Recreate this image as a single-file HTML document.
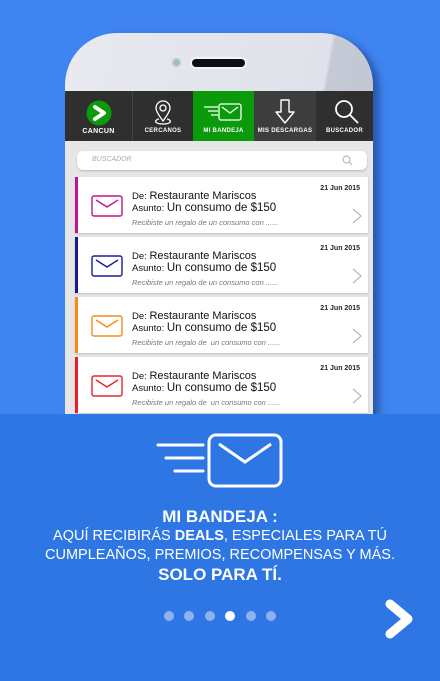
<!DOCTYPE html>
<html><head><meta charset="utf-8"><style>
*{margin:0;padding:0;box-sizing:border-box}
body{width:440px;height:681px;overflow:hidden;background:#3f84f0;font-family:"Liberation Sans",sans-serif;position:relative}
.phone{position:absolute;left:65px;top:33px;width:308px;height:420px;background:linear-gradient(100deg,#e8eaf0 0%,#dfe2ea 70%,#c6cad6 71%,#bfc3d0 100%);border-radius:52px 52px 0 0;box-shadow:6px 4px 8px rgba(0,0,40,.35)}
.cam{position:absolute;left:107px;top:25px;width:9px;height:9px;border-radius:50%;background:#a9adb8;box-shadow:inset 0 0 0 2px #c4c7cf}
.cam:after{content:"";position:absolute;left:3px;top:3px;width:3px;height:3px;border-radius:50%;background:#6fd0e8}
.spk{position:absolute;left:127px;top:26px;width:53px;height:8px;border-radius:4px;background:#0b0f1a;box-shadow:0 0 0 2px #f4f5f8}
.screen{position:absolute;left:65px;top:91px;width:308px;height:330px;background:#e6e6e6;overflow:hidden}
.nav{position:absolute;left:0;top:0;width:308px;height:50px;background:#2f2f2f;display:flex}
.nav div{height:50px;position:relative;color:#fff;font-weight:bold;font-size:6px;text-align:center}
.nav div span{position:absolute;left:0;right:0;top:37px;letter-spacing:.3px}
.search{position:absolute;left:12px;top:60px;width:290px;height:19px;background:#fff;border-radius:6px;box-shadow:0 1px 2px rgba(0,0,0,.2);font-size:7px;font-style:italic;color:#aaa;padding:5px 0 0 15px}
.card{position:absolute;left:10px;width:293px;height:56px;background:#fff;box-shadow:0 1px 2px rgba(0,0,0,.15)}
.card .env{position:absolute;left:13px;top:18px}
.card .t1{position:absolute;left:54px;top:13px;font-size:9.5px;color:#111}
.card .t1 b{font-weight:normal;font-size:11px}
.card .t2{position:absolute;left:54px;top:25px;font-size:9.5px;color:#111}
.card .t2 b{font-weight:normal;font-size:11.5px}
.card .t3{position:absolute;left:54px;top:41px;font-size:7.5px;color:#777;font-style:italic}
.card .d{position:absolute;right:8px;top:8px;font-size:7px;font-weight:bold;color:#222}
.card .ch{position:absolute;right:6px;top:31px}
.panel{position:absolute;left:0;top:414px;width:440px;height:267px;background:#2e76e4;color:#fff;text-align:center}
.h{position:absolute;left:0;right:0;top:93px;font-size:17px;font-weight:bold}
.p{position:absolute;left:0;right:0;top:113px;font-size:14.5px;line-height:19px}
.s{position:absolute;left:0;right:0;top:151px;font-size:17px;font-weight:bold}
.dot{position:absolute;top:197px;width:10px;height:10px;border-radius:50%;background:#8fb1ee}
</style></head><body>
<div class="phone"><div class="cam"></div><div class="spk"></div></div>
<div class="screen">
 <div class="nav">
  <div style="width:68px;border-right:1px solid #444"><svg style="position:absolute;left:21px;top:9px" width="26" height="26"><circle cx="13" cy="13" r="12.5" fill="#0a9a0a"/><path d="M9 7 L18 13 L9 19" stroke="#fff" stroke-width="4" fill="none" stroke-linecap="round" stroke-linejoin="round"/></svg><span style="font-size:7px">CANCUN</span></div>
  <div style="width:60px"><svg style="position:absolute;left:20px;top:8px" width="20" height="28" fill="none" stroke="#fff" stroke-width="1.3"><path d="M10 22 C4 14 3 11 3 9 A7 7 0 0 1 17 9 C17 11 16 14 10 22Z"/><circle cx="10" cy="9" r="3"/><path d="M6 20 C1 21 1 25 10 25 C19 25 19 21 14 20"/></svg><span>CERCANOS</span></div>
  <div style="width:61px;background:#0a9a0a"><svg style="position:absolute;left:11px;top:12px" width="40" height="20" fill="none" stroke="#fff" stroke-width="1.3"><path d="M0 4H14M4 8H14M7 12H14"/><rect x="15" y="1" width="22" height="16" rx="2"/><path d="M18 4L26 10L34 4"/></svg><span>MI BANDEJA</span></div>
  <div style="width:62px;background:#3d3d3d"><svg style="position:absolute;left:21px;top:8px" width="20" height="26" fill="none" stroke="#fff" stroke-width="1.4"><path d="M6 1H14V13H19L10 24L1 13H6Z" stroke-linejoin="round"/></svg><span>MIS DESCARGAS</span></div>
  <div style="width:57px"><svg style="position:absolute;left:18px;top:8px" width="26" height="26" fill="none" stroke="#fff" stroke-width="1.8"><circle cx="10" cy="10" r="8"/><path d="M16 16L24 24"/></svg><span>BUSCADOR</span></div>
 </div>
 <div class="search">BUSCADOR<svg style="position:absolute;right:14px;top:4px" width="11" height="11" fill="none" stroke="#bbb" stroke-width="1.2"><circle cx="4.5" cy="4.5" r="3.5"/><path d="M7 7L10 10"/></svg></div>
 <div class="card" style="top:86px;border-left:3px solid #c0168c"><svg class="env" width="32" height="22" fill="none" stroke="#c0168c" stroke-width="1.4"><rect x="1" y="1" width="30" height="20" rx="2"/><path d="M5 5L16 12L27 5"/></svg><div class="t1">De: <b>Restaurante Mariscos</b></div><div class="t2">Asunto: <b>Un consumo de $150</b></div><div class="t3">Recibiste un regalo de un consumo con ......</div><div class="d">21 Jun 2015</div><svg class="ch" width="10" height="16" fill="none" stroke="#aaa" stroke-width="1"><path d="M1 1L9 8L1 15"/></svg></div>
 <div class="card" style="top:146px;border-left:3px solid #1a1a8c"><svg class="env" width="32" height="22" fill="none" stroke="#1a1aa0" stroke-width="1.4"><rect x="1" y="1" width="30" height="20" rx="2"/><path d="M5 5L16 12L27 5"/></svg><div class="t1">De: <b>Restaurante Mariscos</b></div><div class="t2">Asunto: <b>Un consumo de $150</b></div><div class="t3">Recibiste un regalo de un consumo con ......</div><div class="d">21 Jun 2015</div><svg class="ch" width="10" height="16" fill="none" stroke="#aaa" stroke-width="1"><path d="M1 1L9 8L1 15"/></svg></div>
 <div class="card" style="top:206px;border-left:3px solid #f58a1e"><svg class="env" width="32" height="22" fill="none" stroke="#f58a1e" stroke-width="1.4"><rect x="1" y="1" width="30" height="20" rx="2"/><path d="M5 5L16 12L27 5"/></svg><div class="t1">De: <b>Restaurante Mariscos</b></div><div class="t2">Asunto: <b>Un consumo de $150</b></div><div class="t3">Recibiste un regalo de&nbsp; un consumo con ......</div><div class="d">21 Jun 2015</div><svg class="ch" width="10" height="16" fill="none" stroke="#aaa" stroke-width="1"><path d="M1 1L9 8L1 15"/></svg></div>
 <div class="card" style="top:266px;border-left:3px solid #e8202a"><svg class="env" width="32" height="22" fill="none" stroke="#e8202a" stroke-width="1.4"><rect x="1" y="1" width="30" height="20" rx="2"/><path d="M5 5L16 12L27 5"/></svg><div class="t1">De: <b>Restaurante Mariscos</b></div><div class="t2">Asunto: <b>Un consumo de $150</b></div><div class="t3">Recibiste un regalo de&nbsp; un consumo con ......</div><div class="d">21 Jun 2015</div><svg class="ch" width="10" height="16" fill="none" stroke="#aaa" stroke-width="1"><path d="M1 1L9 8L1 15"/></svg></div>
</div>
<div class="panel">
 <svg style="position:absolute;left:156px;top:18px" width="130" height="56" fill="none" stroke="#fff" stroke-width="3"><path d="M2 13H47M10 26H47M19 39H47" stroke-linecap="round"/><rect x="53" y="3" width="72" height="51" rx="7"/><path d="M63 12L89 30L115 12"/></svg>
 <div class="h">MI BANDEJA :</div>
 <div class="p">AQUÍ RECIBIRÁS <b>DEALS</b>, ESPECIALES PARA TÚ<br>CUMPLEAÑOS, PREMIOS, RECOMPENSAS Y MÁS.</div>
 <div class="s">SOLO PARA TÍ.</div>
 <div class="dot" style="left:164px"></div><div class="dot" style="left:184px"></div><div class="dot" style="left:205px"></div><div class="dot" style="left:225px;background:#fff"></div><div class="dot" style="left:246px"></div><div class="dot" style="left:266px"></div>
 <svg style="position:absolute;left:383px;top:184px" width="32" height="42"><path d="M7 6L25 21L7 36" stroke="#fff" stroke-width="9" fill="none" stroke-linecap="round" stroke-linejoin="round"/></svg>
</div>
</body></html>
